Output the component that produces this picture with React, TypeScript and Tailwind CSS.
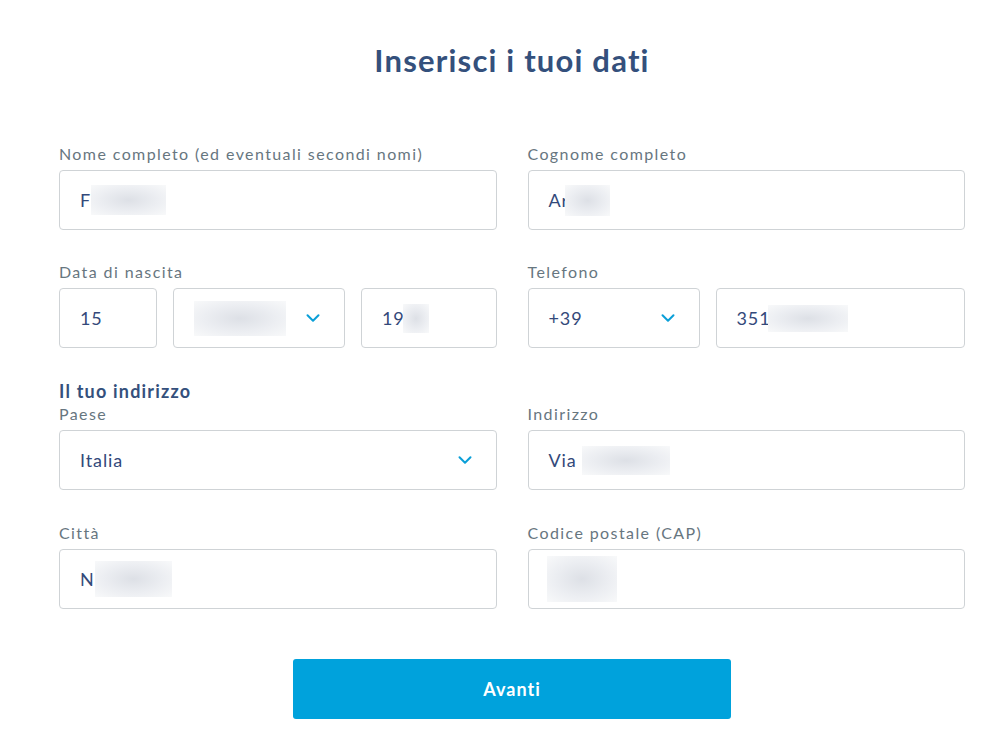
import { ChevronDown } from 'lucide-react'

function Blur({ className }: { className: string }) {
  return (
    <span
      className={`inline-block align-middle bg-[radial-gradient(ellipse_at_center,#dde0e6_0%,#eceef2_55%,#f8f9fa_100%)] ${className}`}
    />
  )
}

function Label({ children }: { children: React.ReactNode }) {
  return <div className="text-[16px] leading-[20px] tracking-[1.4px] text-[#67767f] mb-[6px]">{children}</div>
}

function Box({ className = '', children, select = false }: { className?: string; children?: React.ReactNode; select?: boolean }) {
  return (
    <div
      className={`h-[60px] border border-[#cfd3d6] rounded-[4px] bg-white flex items-center pl-[20px] pr-[20px] text-[18px] tracking-[0.9px] text-[#33497a] ${className}`}
    >
      <div className="flex-1 flex items-center min-w-0">{children}</div>
      {select && <ChevronDown className="w-[22px] h-[22px] text-[#0a9fd8]" strokeWidth={2.2} />}
    </div>
  )
}

export default function App() {
  return (
    <div className="min-h-[743px] bg-white font-['Lato',sans-serif]">
      <div className="ml-[59px] w-[906px] pt-[41px]">
        <h1 className="text-center text-[31px] leading-[38px] tracking-[1.2px] font-bold text-[#34507c]">Inserisci i tuoi dati</h1>

        {/* nome / cognome */}
        <div className="mt-[65px] grid grid-cols-2 gap-x-[31px]">
          <div>
            <Label>Nome completo (ed eventuali secondi nomi)</Label>
            <Box>
              F<Blur className="w-[75px] h-[30px] ml-[0px]" />
            </Box>
          </div>
          <div>
            <Label>Cognome completo</Label>
            <Box>
              Ar<Blur className="w-[45px] h-[31px] -ml-[4px]" />
            </Box>
          </div>
        </div>

        {/* nascita / telefono */}
        <div className="mt-[32px] grid grid-cols-2 gap-x-[31px]">
          <div>
            <Label>Data di nascita</Label>
            <div className="flex gap-[16px]">
              <Box className="w-[98px]">15</Box>
              <Box className="w-[172px] pl-[14px]" select>
                <Blur className="w-[92px] h-[35px]" />
              </Box>
              <Box className="flex-1">
                19<Blur className="w-[26px] h-[29px] -ml-[2px]" />
              </Box>
            </div>
          </div>
          <div>
            <Label>Telefono</Label>
            <div className="flex gap-[16px]">
              <Box className="w-[172px]" select>+39</Box>
              <Box className="flex-1">
                351<Blur className="w-[80px] h-[27px] -ml-[3px]" />
              </Box>
            </div>
          </div>
        </div>

        {/* indirizzo */}
        <div className="mt-[32px] grid grid-cols-2 gap-x-[31px]">
          <div>
            <div className="text-[18px] leading-[22px] tracking-[1.2px] font-bold text-[#34507c] mb-[2px]">Il tuo indirizzo</div>
            <Label>Paese</Label>
            <Box select>Italia</Box>
          </div>
          <div className="pt-[24px]">
            <Label>Indirizzo</Label>
            <Box>
              Via<Blur className="w-[88px] h-[29px] ml-[5px]" />
            </Box>
          </div>
        </div>

        <div className="mt-[33px] grid grid-cols-2 gap-x-[31px]">
          <div>
            <Label>Città</Label>
            <Box>
              N<Blur className="w-[77px] h-[36px]" />
            </Box>
          </div>
          <div>
            <Label>Codice postale (CAP)</Label>
            <Box>
              <Blur className="w-[70px] h-[46px] -ml-[2px]" />
            </Box>
          </div>
        </div>

        <div className="mt-[50px] flex justify-center">
          <button className="w-[438px] h-[60px] rounded-[3px] bg-[#00a2dc] text-white text-[18px] tracking-[1px] font-bold">Avanti</button>
        </div>
      </div>
    </div>
  )
}
